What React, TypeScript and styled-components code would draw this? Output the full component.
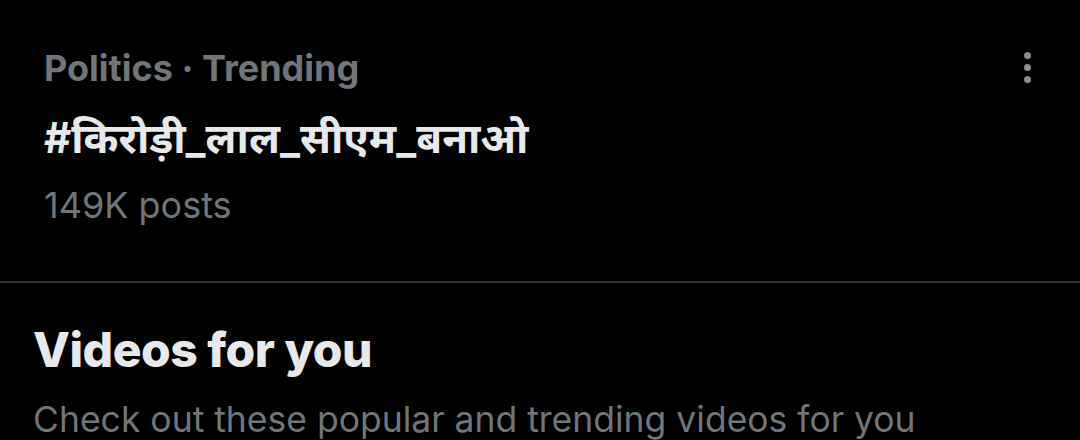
import React from 'react';
import styled, { createGlobalStyle } from 'styled-components';

const GlobalStyle = createGlobalStyle`
  html, body {
    margin: 0;
    padding: 0;
    background: #000;
  }
  body {
    width: 1080px;
    height: 440px;
    overflow: hidden;
    font-family: Inter, "Noto Sans", "Noto Sans Devanagari", sans-serif;
  }
`;

const Page = styled.div`
  width: 1080px;
  height: 440px;
  background: #000;
  display: flex;
  flex-direction: column;
  overflow: hidden;
`;

const TrendItem = styled.div`
  display: flex;
  justify-content: space-between;
  align-items: flex-start;
  padding: 44px 49px 0 44px;
  height: 283px;
  flex-shrink: 0;
  box-sizing: border-box;
  border-bottom: 2px solid #2f3336;
`;

const TrendText = styled.div`
  display: flex;
  flex-direction: column;
`;

const Meta = styled.div<{ $bold?: boolean }>`
  color: #71767b;
  font-size: 36px;
  line-height: 48px;
  font-weight: ${p => (p.$bold ? 700 : 400)};
`;

const Hashtag = styled.div`
  color: #e7e9ea;
  font-size: 42px;
  line-height: 56px;
  font-weight: 700;
  margin: 18px 0 15px;
`;

const MoreButton = styled.button`
  background: none;
  border: none;
  padding: 0;
  margin-top: 8px;
  display: flex;
  flex-direction: column;
  gap: 5px;
`;

const Dot = styled.span`
  width: 7px;
  height: 7px;
  border-radius: 50%;
  background: #8b8f93;
`;

const Section = styled.div`
  padding: 35px 33px 0;
`;

const SectionTitle = styled.h2`
  margin: 0;
  color: #e7e9ea;
  font-size: 48px;
  line-height: 64px;
  font-weight: 800;
  letter-spacing: -0.5px;
`;

const SectionSub = styled.p`
  margin: 14px 0 0;
  color: #71767b;
  font-size: 35.5px;
  line-height: 48px;
  white-space: nowrap;
`;

export default function App() {
  return (
    <Page>
      <GlobalStyle />
      <TrendItem>
        <TrendText>
          <Meta $bold>Politics · Trending</Meta>
          <Hashtag>#किरोड़ी_लाल_सीएम_बनाओ</Hashtag>
          <Meta>149K posts</Meta>
        </TrendText>
        <MoreButton aria-label="More">
          <Dot />
          <Dot />
          <Dot />
        </MoreButton>
      </TrendItem>
      <Section>
        <SectionTitle>Videos for you</SectionTitle>
        <SectionSub>Check out these popular and trending videos for you</SectionSub>
      </Section>
    </Page>
  );
}
